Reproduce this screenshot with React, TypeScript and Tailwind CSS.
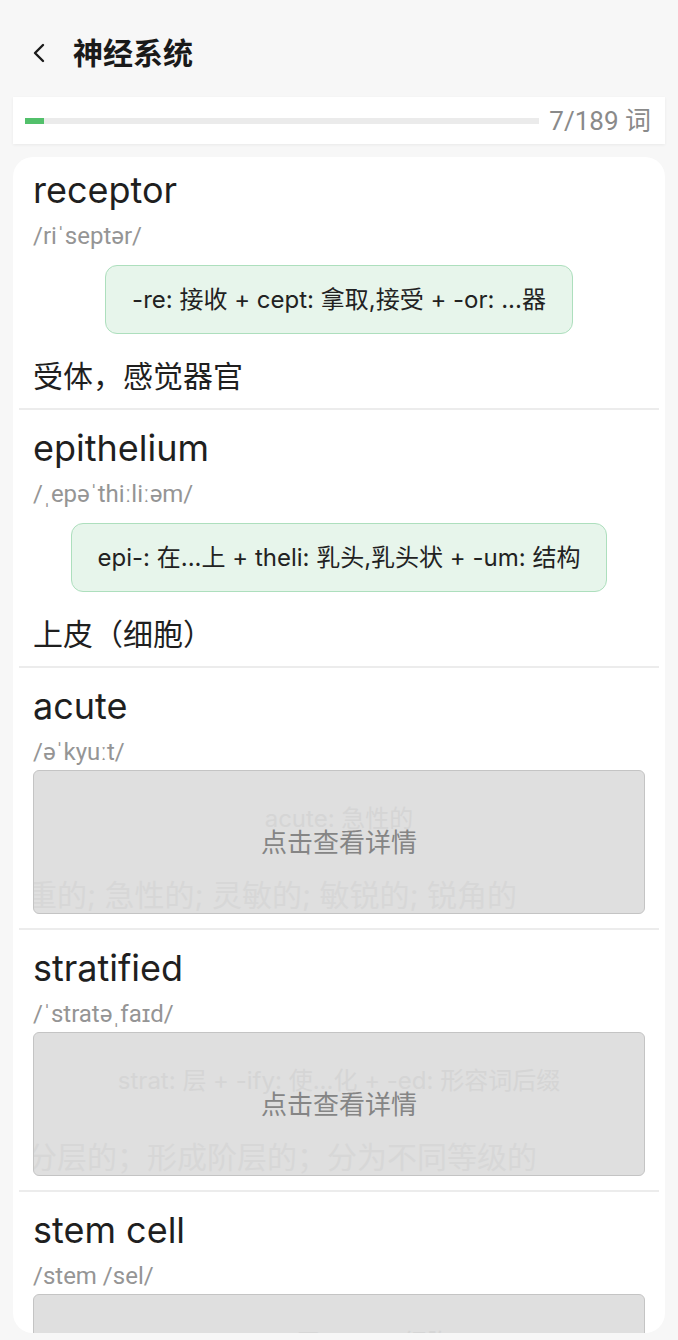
import React from "react";

interface Word {
  word: string;
  phonetic: string;
  morph: string;
  meaning: string;
  hidden?: boolean;
}

const words: Word[] = [
  { word: "receptor", phonetic: "/riˈseptər/", morph: "-re: 接收 + cept: 拿取,接受 + -or: ...器", meaning: "受体，感觉器官" },
  { word: "epithelium", phonetic: "/ˌepəˈthiːliːəm/", morph: "epi-: 在...上 + theli: 乳头,乳头状 + -um: 结构", meaning: "上皮（细胞）" },
  { word: "acute", phonetic: "/əˈkyuːt/", morph: "acute: 急性的", meaning: "重的; 急性的; 灵敏的; 敏锐的; 锐角的", hidden: true },
  { word: "stratified", phonetic: "/ˈstratəˌfaɪd/", morph: "strat: 层 + -ify: 使...化 + -ed: 形容词后缀", meaning: "分层的；形成阶层的；分为不同等级的", hidden: true },
  { word: "stem cell", phonetic: "/stem /sel/", morph: "stem: 干 + cell: 细胞", meaning: "干细胞", hidden: true },
];

function Entry({ item, last }: { item: Word; last: boolean }) {
  return (
    <div>
      <div className={item.hidden ? "px-[20px] pt-[16px] pb-[14px]" : "px-[20px] pt-[16px] pb-[12px]"}>
        <div className="text-[36px] leading-[44px] text-[#1f1f1f]">{item.word}</div>
        <div className="mt-[8px] font-[Roboto,Noto_Sans_CJK_SC,sans-serif] text-[24px] leading-[32px] text-[#959595]">
          {item.phonetic}
        </div>

        {item.hidden ? (
          // covered card: tap to reveal
          <div className="relative mt-[2px] h-[144px] overflow-hidden rounded-[6px] border border-[#c4c4c4] bg-[#dfdfdf]">
            <div className="pt-[33px] text-center text-[24px] leading-[29px] text-[#d5d5d5]">{item.morph}</div>
            <div className="mt-[42px] -ml-[7px] whitespace-nowrap text-[30px] leading-[40px] text-[#d7d7d7]">{item.meaning}</div>
            <div className="absolute inset-0 flex items-center justify-center text-[26px] text-[#858585]">
              点击查看详情
            </div>
          </div>
        ) : (
          <>
            <div className="mt-[13px] flex justify-center">
              <div className="rounded-[12px] border border-[#addfbd] bg-[#e7f5eb] px-[26px] py-[19px] text-[24px] leading-[29px] text-[#222]">
                {item.morph}
              </div>
            </div>
            <div className="mt-[22px] text-[30px] leading-[40px] text-[#1f1f1f]">{item.meaning}</div>
          </>
        )}
      </div>
      {!last && <div className="mx-[6px] h-[2px] bg-[#ececec]" />}
    </div>
  );
}

export default function App() {
  return (
    <div className="flex h-[1340px] flex-col overflow-hidden bg-[#f7f7f7] font-[Inter,Noto_Sans_CJK_SC,sans-serif]">
      {/* header */}
      <div className="flex h-[97px] items-center pt-[8px] pl-[32px]">
        <svg width="14" height="20" viewBox="0 0 14 20" fill="none">
          <path d="M11 2L3 10l8 8" stroke="#1a1a1a" strokeWidth="2.4" strokeLinecap="round" strokeLinejoin="round" />
        </svg>
        <h1 className="ml-[27px] text-[30px] font-bold leading-none text-[#1a1a1a]">神经系统</h1>
      </div>

      {/* progress */}
      <div className="mx-[13px] flex h-[47px] items-center gap-[10px] bg-white pl-[12px] pr-[14px] shadow-[0_1px_3px_rgba(0,0,0,0.06)]">
        <div className="h-[6px] flex-1 bg-[#ebebeb]">
          <div className="h-full w-[19px] bg-[#52c06b]" />
        </div>
        <span className="font-[Roboto,Noto_Sans_CJK_SC,sans-serif] text-[26px] leading-none text-[#8a8a8a]">7/189 词</span>
      </div>

      {/* word list */}
      <div className="mx-[13px] mt-[13px] mb-[7px] flex-1 overflow-hidden rounded-[20px] bg-white">
        <div className="-mt-[5px]">
          {words.map((w, i) => (
            <Entry key={w.word} item={w} last={i === words.length - 1} />
          ))}
        </div>
      </div>
    </div>
  );
}
